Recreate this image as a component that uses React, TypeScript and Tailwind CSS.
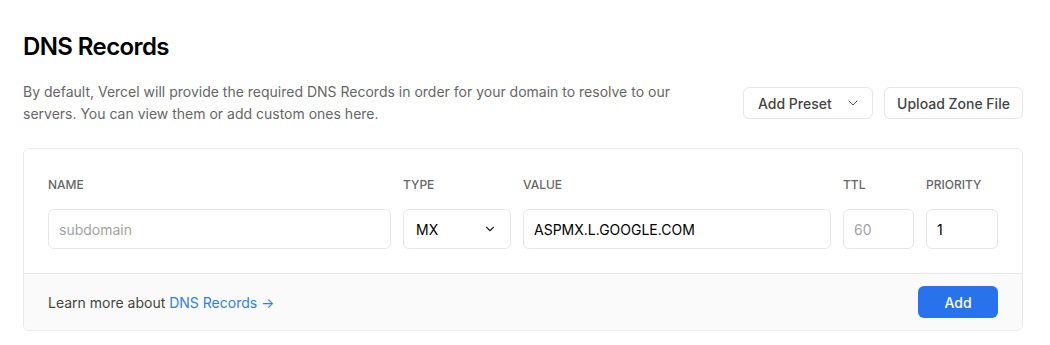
import React from "react";

function Chevron({ className = "", sw = 2, size = 14 }: { className?: string; sw?: number; size?: number }) {
  return (
    <svg className={className} width={size} height={size} viewBox="0 0 24 24" fill="none" stroke="currentColor" strokeWidth={sw} strokeLinecap="round" strokeLinejoin="round">
      <path d="M6 9l6 6 6-6" />
    </svg>
  );
}

export default function App() {
  return (
    <div className="w-[1050px] h-[345px] bg-white text-[#111] overflow-hidden" style={{ fontFamily: "Inter, 'Noto Sans', sans-serif" }}>
      <div className="pl-[23px] pr-[27px] pt-[31px]">
        <h1 className="text-[24px] leading-[32px] font-semibold tracking-[-0.6px] text-black">DNS Records</h1>
        <div className="mt-[18px] flex items-center justify-between">
          <p className="w-[670px] text-[14px] leading-[22px] text-[#666]">
            By default, Vercel will provide the required DNS Records in order for your domain to resolve to our servers. You can view them or add custom ones here.
          </p>
          <div className="flex gap-[11px]">
            <button className="h-[32px] w-[130px] rounded-[6px] border border-[#e6e6e6] bg-white pl-[14px] pr-[11px] flex items-center justify-between text-[14px] font-medium text-[#444]">
              <span>Add Preset</span>
              <Chevron className="text-[#555]" sw={1.5} size={16} />
            </button>
            <button className="h-[32px] w-[139px] rounded-[6px] border border-[#e6e6e6] bg-white px-[12px] flex items-center justify-center text-[14px] font-medium text-[#444]">
              Upload Zone File
            </button>
          </div>
        </div>
        <div className="mt-[23px] w-[1000px] rounded-[6px] border border-[#eaeaea] overflow-hidden">
          <div className="bg-white px-[24px] pt-[28px] pb-[24px]">
            <div className="grid grid-cols-[343px_108px_308px_71px_72px] gap-x-[12px]">
              {["NAME", "TYPE", "VALUE", "TTL", "PRIORITY"].map((l) => (
                <div key={l} className="text-[12px] leading-[16px] font-medium text-[#666]">{l}</div>
              ))}
              <div className="mt-[16px] h-[40px] rounded-[6px] border border-[#e6e6e6] flex items-center px-[10px] text-[14px] text-[#a3a3a3]">subdomain</div>
              <div className="mt-[16px] h-[40px] rounded-[6px] border border-[#e6e6e6] flex items-center justify-between pl-[12px] pr-[13px] text-[14px] text-black">
                <span>MX</span>
                <Chevron className="text-[#222]" />
              </div>
              <div className="mt-[16px] h-[40px] rounded-[6px] border border-[#e6e6e6] flex items-center px-[10px] text-[14px] text-black">ASPMX.L.GOOGLE.COM</div>
              <div className="mt-[16px] h-[40px] rounded-[6px] border border-[#e6e6e6] flex items-center px-[10px] text-[14px] text-[#a3a3a3]">60</div>
              <div className="mt-[16px] h-[40px] rounded-[6px] border border-[#e6e6e6] flex items-center px-[10px] text-[14px] text-black">1</div>
            </div>
          </div>
          <div className="border-t border-[#eaeaea] bg-[#fafafa] h-[57px] px-[24px] flex items-center justify-between">
            <p className="text-[14px] text-[#444]">
              Learn more about <span className="text-[#2d7ff0]">DNS Records →</span>
            </p>
            <button className="h-[32px] w-[80px] rounded-[6px] bg-[#2873ec] text-white text-[14px] font-medium">Add</button>
          </div>
        </div>
      </div>
    </div>
  );
}
